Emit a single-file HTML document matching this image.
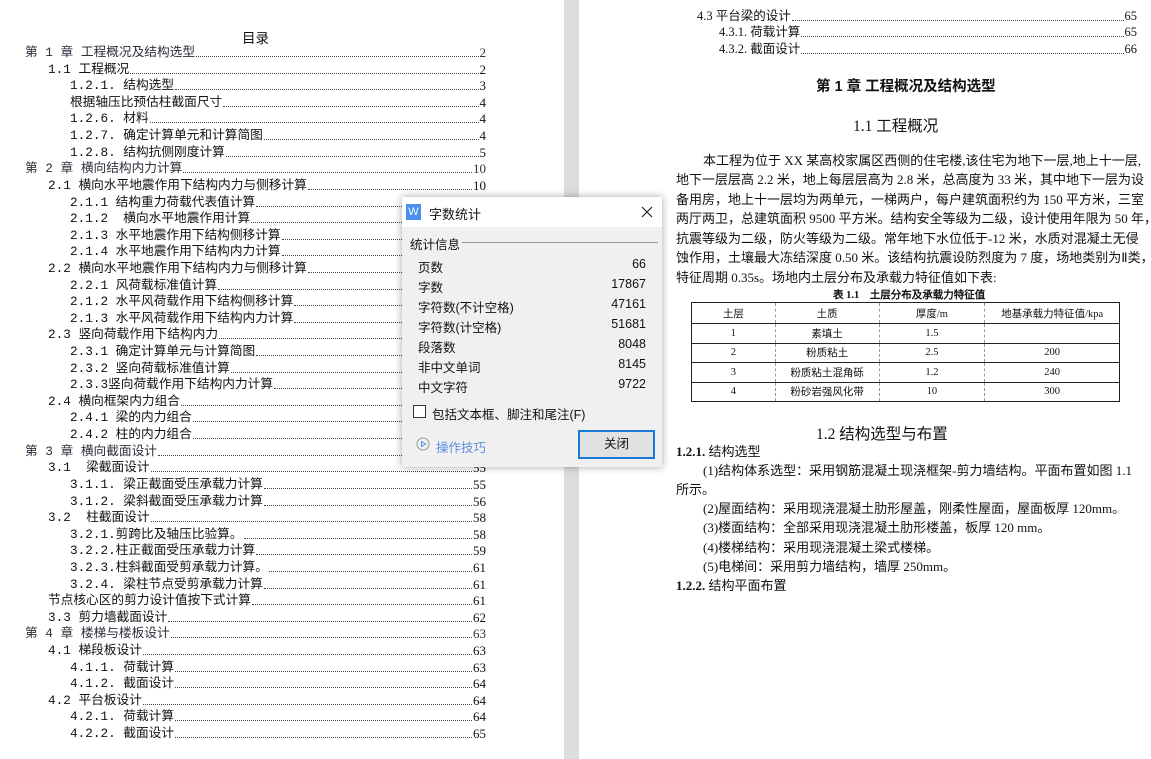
<!DOCTYPE html>
<html><head><meta charset="utf-8"><style>
*{margin:0;padding:0;box-sizing:border-box}
body{width:1151px;height:759px;overflow:hidden;background:#fff;position:relative;font-family:"Liberation Sans","Noto Sans CJK SC","WenQuanYi Zen Hei",sans-serif;color:#111}
.gap{position:absolute;left:564px;top:0;width:15px;height:759px;background:#dcdddf}
.t{position:absolute;display:flex;align-items:flex-end;font-size:12.5px;line-height:15px;height:15px;white-space:nowrap;font-family:"Liberation Serif","WenQuanYi Zen Hei",serif}
#toc .t{font-family:"Liberation Mono","WenQuanYi Zen Hei",monospace;font-size:12.7px}
#toc .t span:last-child{font-family:"Liberation Serif",serif;font-size:13px}
.t .l{flex:1;border-bottom:1px dotted #444;margin:0 1px 3px 1px}
.c{color:#2b2f3a}
.a{position:absolute;white-space:nowrap;font-family:"Liberation Serif","WenQuanYi Zen Hei",serif}
.p{font-size:13px;line-height:15px}
table{position:absolute;left:691px;top:302px;width:429px;border-collapse:collapse;font-size:10.5px;font-family:"Liberation Serif","WenQuanYi Zen Hei",serif}
td{border:1px solid #222;text-align:center;height:19.5px;padding:0;border-left:1px dashed #999;border-right:1px dashed #999}
td:first-child{border-left:1px solid #222}td:last-child{border-right:1px solid #222}
.dlg{position:absolute;left:402px;top:197px;width:260px;height:270px;background:#f0f0f0;box-shadow:0 0 8px rgba(0,0,0,.35);font-family:"Liberation Sans","Noto Sans CJK SC",sans-serif;font-size:12.5px;color:#111}
.dlg .tb{height:30px;background:#fff;position:relative}
.dlg .row{position:absolute;left:16px;width:228px;display:flex;justify-content:space-between}
</style></head><body>
<div class="gap"></div>
<div class="a" style="left:242px;top:27px;font-size:13.5px">目录</div>
<div id="toc"></div>
<div class="t" style="left:697px;top:9px;width:440px"><span>4.3 平台梁的设计</span><span class="l"></span><span>65</span></div>
<div class="t" style="left:719px;top:25px;width:418px"><span>4.3.1. 荷载计算</span><span class="l"></span><span>65</span></div>
<div class="t" style="left:719px;top:42px;width:418px"><span>4.3.2. 截面设计</span><span class="l"></span><span>66</span></div>
<div class="a" style="left:816px;top:75px;font-size:14.5px;font-weight:bold;font-family:'Liberation Sans','Noto Sans CJK SC',sans-serif">第 1 章 工程概况及结构选型</div>
<div class="a" style="left:853px;top:114px;font-size:15.5px">1.1 工程概况</div>
<div class="a p" style="left:703px;top:153px">本工程为位于 XX 某高校家属区西侧的住宅楼,该住宅为地下一层,地上十一层,</div>
<div class="a p" style="left:676px;top:172px">地下一层层高 2.2 米，地上每层层高为 2.8 米，总高度为 33 米，其中地下一层为设</div>
<div class="a p" style="left:676px;top:192px">备用房，地上十一层均为两单元，一梯两户，每户建筑面积约为 150 平方米，三室</div>
<div class="a p" style="left:676px;top:211px">两厅两卫，总建筑面积 9500 平方米。结构安全等级为二级，设计使用年限为 50 年，</div>
<div class="a p" style="left:676px;top:231px">抗震等级为二级，防火等级为二级。常年地下水位低于-12 米，水质对混凝土无侵</div>
<div class="a p" style="left:676px;top:250px">蚀作用，土壤最大冻结深度 0.50 米。该结构抗震设防烈度为 7 度，场地类别为Ⅱ类，</div>
<div class="a p" style="left:676px;top:270px">特征周期 0.35s。场地内土层分布及承载力特征值如下表:</div>
<div class="a" style="left:833px;top:287px;font-size:10.5px;font-weight:bold">表 1.1&nbsp;&nbsp;&nbsp; 土层分布及承载力特征值</div>
<table>
<colgroup><col style="width:84px"><col style="width:104px"><col style="width:106px"><col style="width:135px"></colgroup>
<tr><td style="height:21px">土层</td><td>土质</td><td>厚度/m</td><td>地基承载力特征值/kpa</td></tr>
<tr><td>1</td><td>素填土</td><td>1.5</td><td></td></tr>
<tr><td>2</td><td>粉质粘土</td><td>2.5</td><td>200</td></tr>
<tr><td>3</td><td>粉质粘土混角砾</td><td>1.2</td><td>240</td></tr>
<tr><td>4</td><td>粉砂岩强风化带</td><td>10</td><td>300</td></tr>
</table>
<div class="a" style="left:816px;top:422px;font-size:15.5px">1.2 结构选型与布置</div>
<div class="a p" style="left:676px;top:444px"><b>1.2.1.</b> 结构选型</div>
<div class="a p" style="left:703px;top:463px">(1)结构体系选型：采用钢筋混凝土现浇框架-剪力墙结构。平面布置如图 1.1</div>
<div class="a p" style="left:676px;top:482px">所示。</div>
<div class="a p" style="left:703px;top:501px">(2)屋面结构：采用现浇混凝土肋形屋盖，刚柔性屋面，屋面板厚 120mm。</div>
<div class="a p" style="left:703px;top:520px">(3)楼面结构：全部采用现浇混凝土肋形楼盖，板厚 120 mm。</div>
<div class="a p" style="left:703px;top:540px">(4)楼梯结构：采用现浇混凝土梁式楼梯。</div>
<div class="a p" style="left:703px;top:559px">(5)电梯间：采用剪力墙结构，墙厚 250mm。</div>
<div class="a p" style="left:676px;top:578px"><b>1.2.2.</b> 结构平面布置</div>

<div class="dlg">
<div class="tb">
<div style="position:absolute;left:4px;top:7px;width:15px;height:16px;background:#4a8ff0;color:#fff;font-size:11px;text-align:center;line-height:16px">W</div>
<div style="position:absolute;left:27px;top:7px;font-size:13px">字数统计</div>
<svg style="position:absolute;left:239px;top:9px" width="12" height="12"><path d="M1 1L11 11M11 1L1 11" stroke="#222" stroke-width="1.2"/></svg>
</div>
<div style="position:absolute;left:8px;top:37px">统计信息</div>
<div style="position:absolute;left:60px;top:45px;width:196px;border-top:1px solid #999"></div>
<div class="row" style="top:60px"><span>页数</span><span>66</span></div>
<div class="row" style="top:80px"><span>字数</span><span>17867</span></div>
<div class="row" style="top:100px"><span>字符数(不计空格)</span><span>47161</span></div>
<div class="row" style="top:120px"><span>字符数(计空格)</span><span>51681</span></div>
<div class="row" style="top:140px"><span>段落数</span><span>8048</span></div>
<div class="row" style="top:160px"><span>非中文单词</span><span>8145</span></div>
<div class="row" style="top:180px"><span>中文字符</span><span>9722</span></div>
<div style="position:absolute;left:11px;top:208px;width:13px;height:13px;border:1px solid #333;background:#fff"></div>
<div style="position:absolute;left:30px;top:207px">包括文本框、脚注和尾注(F)</div>
<svg style="position:absolute;left:14px;top:240px" width="14" height="14"><circle cx="7" cy="7" r="6" fill="none" stroke="#999"/><path d="M5.5 4.5L9.5 7L5.5 9.5Z" fill="none" stroke="#4a8ff0"/></svg>
<div style="position:absolute;left:34px;top:240px;color:#5a8fe0">操作技巧</div>
<div style="position:absolute;left:176px;top:233px;width:77px;height:29px;border:2px solid #1a78d6;background:#e1e1e1;text-align:center;line-height:25px">关闭</div>
</div>
<script>
var d=[["第 1 章 工程概况及结构选型",0,"2"],["1.1 工程概况",1,"2"],["1.2.1. 结构选型",2,"3"],["根据轴压比预估柱截面尺寸",2,"4"],["1.2.6. 材料",2,"4"],["1.2.7. 确定计算单元和计算简图",2,"4"],["1.2.8. 结构抗侧刚度计算",2,"5"],["第 2 章 横向结构内力计算",0,"10"],["2.1 横向水平地震作用下结构内力与侧移计算",1,"10"],["2.1.1 结构重力荷载代表值计算",2,"10"],["2.1.2  横向水平地震作用计算",2,"11"],["2.1.3 水平地震作用下结构侧移计算",2,"11"],["2.1.4 水平地震作用下结构内力计算",2,"12"],["2.2 横向水平地震作用下结构内力与侧移计算",1,"13"],["2.2.1 风荷载标准值计算",2,"13"],["2.1.2 水平风荷载作用下结构侧移计算",2,"14"],["2.1.3 水平风荷载作用下结构内力计算",2,"15"],["2.3 竖向荷载作用下结构内力",1,"17"],["2.3.1 确定计算单元与计算简图",2,"17"],["2.3.2 竖向荷载标准值计算",2,"18"],["2.3.3竖向荷载作用下结构内力计算",2,"21"],["2.4 横向框架内力组合",1,"35"],["2.4.1 梁的内力组合",2,"35"],["2.4.2 柱的内力组合",2,"45"],["第 3 章 横向截面设计",0,"55"],["3.1  梁截面设计",1,"55"],["3.1.1. 梁正截面受压承载力计算",2,"55"],["3.1.2. 梁斜截面受压承载力计算",2,"56"],["3.2  柱截面设计",1,"58"],["3.2.1.剪跨比及轴压比验算。",2,"58"],["3.2.2.柱正截面受压承载力计算",2,"59"],["3.2.3.柱斜截面受剪承载力计算。",2,"61"],["3.2.4. 梁柱节点受剪承载力计算",2,"61"],["节点核心区的剪力设计值按下式计算",1,"61"],["3.3 剪力墙截面设计",1,"62"],["第 4 章 楼梯与楼板设计",0,"63"],["4.1 梯段板设计",1,"63"],["4.1.1. 荷载计算",2,"63"],["4.1.2. 截面设计",2,"64"],["4.2 平台板设计",1,"64"],["4.2.1. 荷载计算",2,"64"],["4.2.2. 截面设计",2,"65"]];
var L=[25,48,70],h="";
d.forEach(function(r,i){var y=45+i*16.61;h+='<div class="t'+(r[1]==0?' c':'')+'" style="left:'+L[r[1]]+'px;top:'+y.toFixed(1)+'px;width:'+(486-L[r[1]])+'px"><span>'+r[0].replace(/ /g,'&nbsp;')+'</span><span class="l"></span><span>'+r[2]+'</span></div>';});
document.getElementById("toc").innerHTML=h;
</script>
</body></html>
